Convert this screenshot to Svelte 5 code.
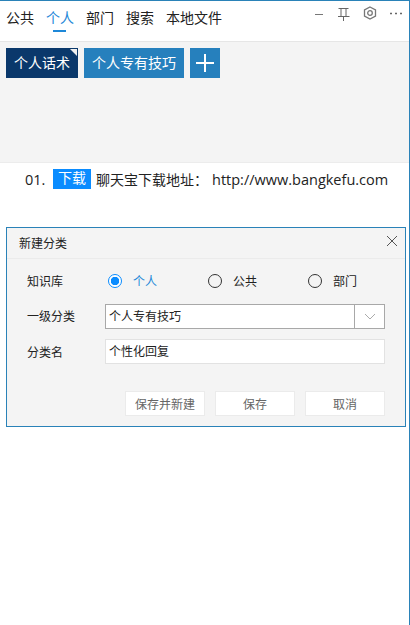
<script lang="ts">
  const tabs = ['公共', '个人', '部门', '搜索', '本地文件'];
  const kinds = ['个人', '公共', '部门'];
  let active = $state('个人');
  let kind = $state('个人');
</script>

<div class="window">
  <header class="topbar">
    <nav class="tabs">
      {#each tabs as tab}
        <button class="tab" class:active={active === tab} onclick={() => (active = tab)}>{tab}</button>
      {/each}
    </nav>
    <div class="tools">
      <svg width="10" height="16" viewBox="0 0 10 16"><path d="M0 8.500h8" stroke="#777" fill="none"/></svg>
      <svg width="14" height="16" viewBox="0 0 14 16"><path d="M1.500 2.500h10M4 2.500v8M9 2.500v8M1 10.500h11.500M6.500 10.500v4.500" stroke="#666" fill="none"/></svg>
      <svg width="14" height="16" viewBox="0 0 14 16"><path d="M7 1l5.500 3v6L7 13l-5.500-3V4z" stroke="#777" stroke-width="1.300" fill="none"/><circle cx="7" cy="7" r="2.300" stroke="#777" stroke-width="1.300" fill="none"/></svg>
      <svg width="14" height="16" viewBox="0 0 14 16"><path d="M1 7.500h2M6 7.500h2M11 7.500h2" stroke="#666" stroke-width="1.500" fill="none"/></svg>
    </div>
  </header>

  <section class="tags">
    <button class="tag current">个人话术</button>
    <button class="tag">个人专有技巧</button>
    <button class="tag add" aria-label="添加">
      <svg width="18" height="18" viewBox="0 0 18 18"><path d="M9 0v18M0 9h18" stroke="#fff" stroke-width="2" fill="none"/></svg>
    </button>
  </section>

  <div class="row">
    <span class="num">01.</span>
    <span class="badge">下载</span>
    <span class="cn">聊天宝下载地址：</span>
    <span class="url">http://www.bangkefu.com</span>
  </div>

  <div class="dialog">
    <div class="title">
      <span class="title-text">新建分类</span>
      <svg class="close" width="12" height="12" viewBox="0 0 12 12"><path d="M1 1l10 10M11 1L1 11" stroke="#555" fill="none"/></svg>
    </div>
    <div class="form">
      <div class="field radios">
        <span class="label">知识库</span>
        <div class="options">
          {#each kinds as k}
            <button class="radio" class:on={kind === k} onclick={() => (kind = k)}>
              <span class="ring"></span><span class="radio-text">{k}</span>
            </button>
          {/each}
        </div>
      </div>
      <div class="field select-row">
        <span class="label">一级分类</span>
        <div class="select">
          <span class="value">个人专有技巧</span>
          <span class="arrow">
            <svg width="12" height="7" viewBox="0 0 12 7"><path d="M1 1l5 5 5-5" stroke="#aaa" fill="none"/></svg>
          </span>
        </div>
      </div>
      <div class="field name-row">
        <span class="label">分类名</span>
        <div class="input">个性化回复</div>
      </div>
      <div class="actions">
        <button class="btn">保存并新建</button>
        <button class="btn">保存</button>
        <button class="btn">取消</button>
      </div>
    </div>
  </div>
</div>

<style>
  :global(body) {
    margin: 0;
    background: #fff;
  }

  .window {
    box-sizing: border-box;
    width: 410px;
    height: 625px;
    border-top: 1px solid #2a82b8;
    border-right: 1px solid #2a82b8;
    font-family: "Liberation Sans", "Noto Sans CJK SC", sans-serif;
    font-size: 12px;
    color: #222;
    overflow: hidden;
  }

  button {
    font: inherit;
    background: none;
    border: none;
    padding: 0;
    color: inherit;
  }

  .topbar {
    display: flex;
    justify-content: space-between;
    height: 41px;
    box-sizing: border-box;
    padding: 0 6px;
    border-bottom: 1px solid #e6e6e6;
  }

  .tabs {
    display: flex;
    gap: 12px;
  }

  .tab {
    position: relative;
    height: 34px;
    font-size: 14px;
    line-height: 34px;
  }

  .tab.active {
    color: #1e88d8;
  }

  .tab.active::after {
    content: '';
    position: absolute;
    left: 7px;
    right: 8px;
    bottom: 3px;
    height: 2px;
    background: #1e88d8;
  }

  .tools {
    display: flex;
    align-items: flex-start;
    gap: 12px;
    padding-top: 5px;
  }

  .tags {
    display: flex;
    gap: 6px;
    height: 121px;
    box-sizing: border-box;
    padding: 6px 6px 0;
    background: #f4f4f4;
    border-bottom: 1px solid #ececec;
  }

  .tag {
    position: relative;
    height: 30px;
    padding: 0 8px;
    background: #2680bd;
    color: #fff;
    font-size: 14px;
    line-height: 30px;
  }

  .tag.current {
    background: #0a386b;
  }

  .tag.current::after {
    content: '';
    position: absolute;
    top: 1px;
    right: 1px;
    border-top: 7px solid #f0f0f0;
    border-left: 7px solid transparent;
  }

  .tag.add {
    display: flex;
    align-items: center;
    justify-content: center;
    width: 30px;
    padding: 0;
  }

  .row {
    display: flex;
    align-items: center;
    height: 20px;
    margin-top: 6px;
    padding-left: 25px;
    font-size: 14px;
  }

  .num {
    width: 28px;
    font-family: "Open Sans", sans-serif;
    font-size: 14.500px;
  }

  .badge {
    width: 38px;
    height: 20px;
    line-height: 19px;
    text-align: center;
    background: #0a8cff;
    color: #fff;
  }

  .cn {
    margin-left: 5px;
    width: 116px;
  }

  .url {
    font-family: "Open Sans", sans-serif;
    font-size: 14.500px;
  }

  .dialog {
    box-sizing: border-box;
    width: 400px;
    height: 200px;
    margin: 38px 0 0 6px;
    background: #f4f4f4;
    border: 1px solid #2a82b8;
  }

  .title {
    display: flex;
    align-items: center;
    justify-content: space-between;
    height: 31px;
    box-sizing: border-box;
    padding: 0 7px 0 12px;
    border-bottom: 1px solid #ebebeb;
  }

  .title-text,
  .radio-text,
  .radios .label,
  .select-row .label {
    padding-bottom: 2px;
  }

  .close {
    margin-bottom: 4px;
  }

  .form {
    padding: 0 20px;
  }

  .field {
    display: flex;
    align-items: center;
  }

  .label {
    width: 78px;
    flex-shrink: 0;
  }

  .radios {
    height: 30px;
    margin-top: 7px;
  }

  .options {
    display: flex;
    padding-left: 3px;
  }

  .radio {
    display: flex;
    align-items: center;
    gap: 11px;
    width: 100px;
  }

  .radio.on {
    color: #1e88d8;
  }

  .ring {
    box-sizing: border-box;
    width: 14px;
    height: 14px;
    border: 1px solid #333;
    border-radius: 50%;
  }

  .radio.on .ring {
    border-color: #0a8cff;
    background: radial-gradient(circle, #0a8cff 0 4px, #fff 4.500px);
  }

  .select-row {
    margin-top: 8px;
  }

  .name-row {
    margin-top: 10px;
  }

  .select,
  .input {
    box-sizing: border-box;
    width: 280px;
    height: 25px;
    background: #fff;
    line-height: 24px;
  }

  .select {
    display: flex;
    justify-content: space-between;
    border: 1px solid #a8a8a8;
  }

  .value {
    padding-left: 3px;
  }

  .arrow {
    box-sizing: border-box;
    display: flex;
    align-items: center;
    justify-content: center;
    width: 30px;
    border-left: 1px solid #a8a8a8;
  }

  .input {
    padding-left: 3px;
    border: 1px solid #e2e2e2;
  }

  .actions {
    display: flex;
    justify-content: flex-end;
    gap: 10px;
    margin-top: 27px;
  }

  .btn {
    box-sizing: border-box;
    width: 80px;
    height: 25px;
    background: #fff;
    border: 1px solid #ebebeb;
    color: #666;
  }
</style>
